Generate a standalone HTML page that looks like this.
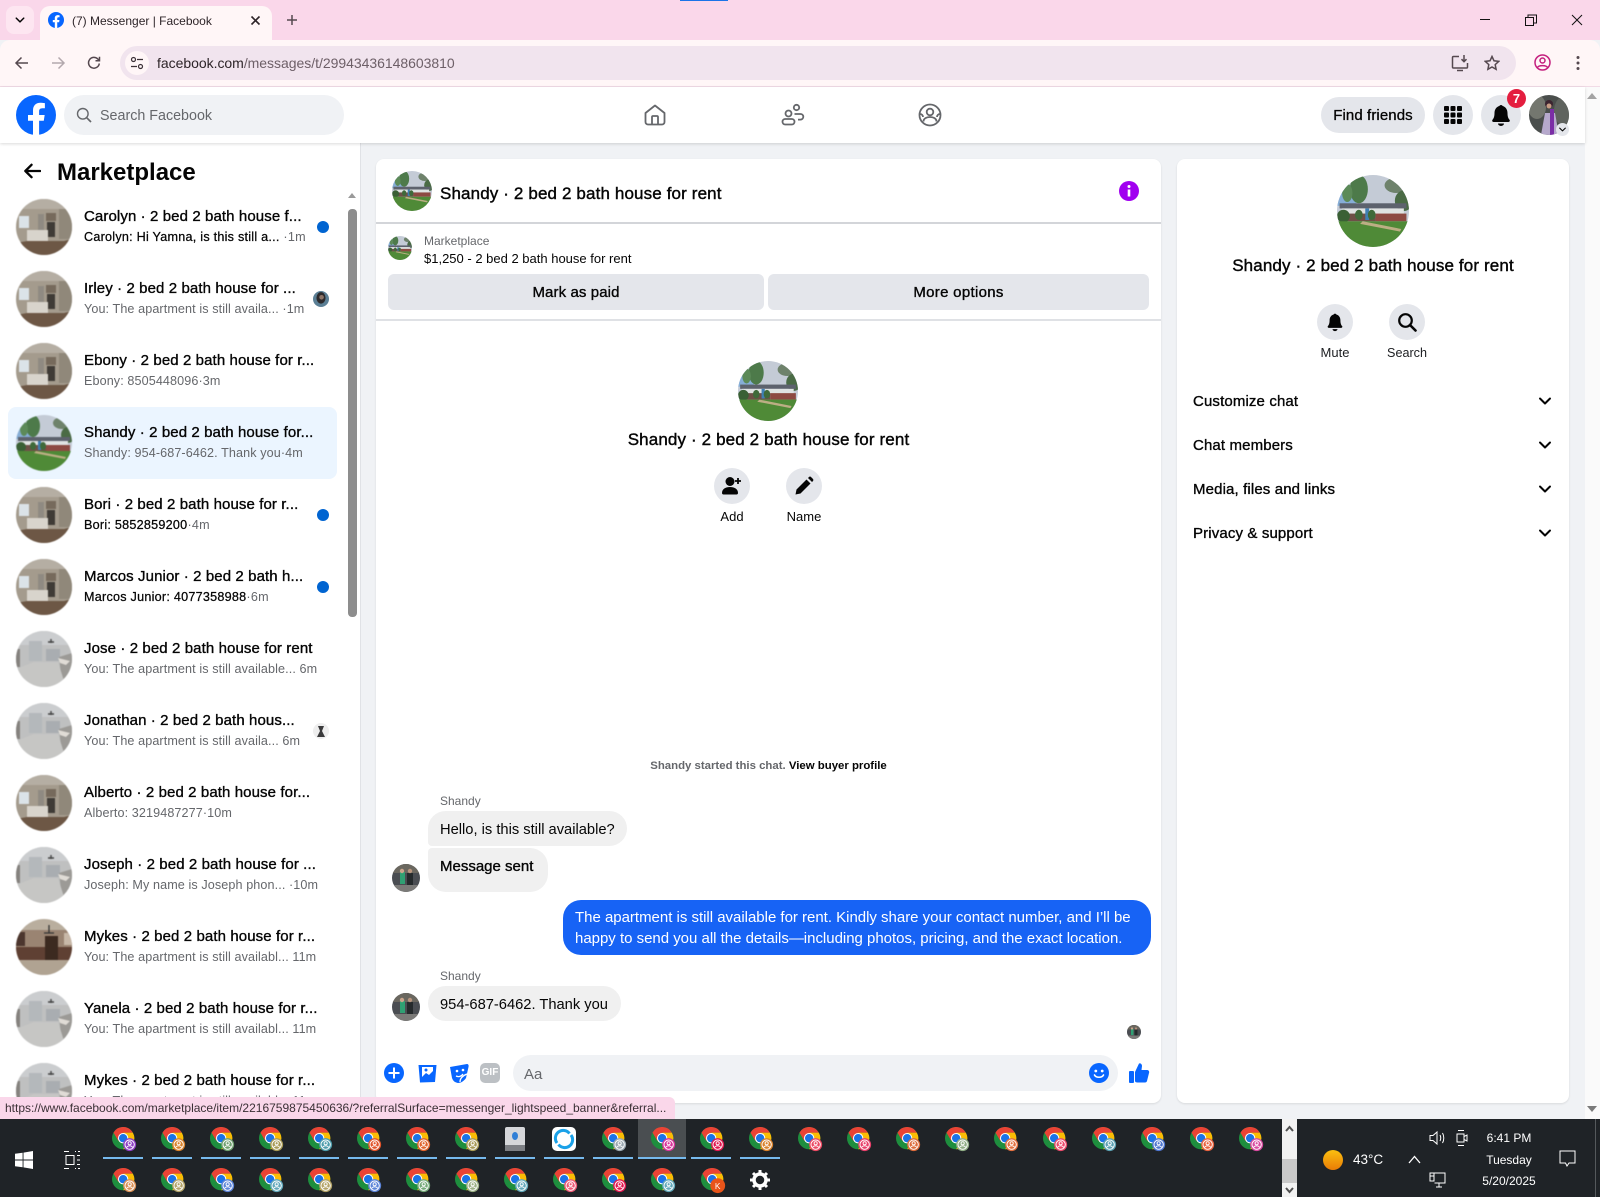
<!DOCTYPE html>
<html><head><meta charset="utf-8"><title>(7) Messenger | Facebook</title>
<style>
*{box-sizing:border-box}
html,body{margin:0;padding:0;width:1600px;height:1197px;overflow:hidden;background:#f0f2f5;font-family:"Liberation Sans",sans-serif;color:#050505}
.a{position:absolute}
.t{position:absolute;white-space:nowrap;line-height:20px}
.m{-webkit-text-stroke:.4px currentColor;letter-spacing:.13px}
.r{position:absolute;left:8px;width:329px;height:72px}
.r svg.av{position:absolute;left:8px;top:8px;width:56px;height:56px;border-radius:50%;filter:blur(.4px)}
.r b{position:absolute;left:76px;top:16px;font-weight:400;font-size:15px;line-height:20px;white-space:nowrap;letter-spacing:.1px;-webkit-text-stroke:.35px #050505}
.r i{position:absolute;left:76px;top:37px;font-style:normal;font-size:12.6px;line-height:18px;white-space:nowrap;color:#65676b;letter-spacing:.1px}
.r i.u{color:#050505;-webkit-text-stroke:.25px #050505;letter-spacing:.25px}
.r i.u span{color:#65676b;-webkit-text-stroke:0}
.dot{position:absolute;left:309px;top:30px;width:12px;height:12px;border-radius:50%;background:#0064d1}
.circ{position:absolute;border-radius:50%;background:#e4e6eb}
.bub{position:absolute;background:#f0f0f0;font-size:14.7px;line-height:20px;white-space:nowrap}
.ch{position:absolute;width:26px;height:26px}
.ul{position:absolute;top:1157px;width:40px;height:2px;background:#76b9ed}
.mi{position:absolute;left:1193px;font-size:15px;line-height:20px;letter-spacing:.13px;-webkit-text-stroke:.35px #050505;white-space:nowrap}
</style></head>
<body>
<svg width="0" height="0" style="position:absolute">
<defs>
<symbol id="c" viewBox="0 0 28 28">
<circle cx="12" cy="12" r="12" fill="#1e8e3e"/>
<path d="M22.4 6A12 12 0 0 1 12 24L17.2 15 12 6z" fill="#fbbc04"/>
<path d="M1.6 6A12 12 0 0 1 22.4 6H12L6.8 15z" fill="#ea4335"/>
<circle cx="12" cy="12" r="5.6" fill="#fff"/><circle cx="12" cy="12" r="4.5" fill="#1a73e8"/>
<circle cx="19" cy="19" r="7" fill="currentColor"/>
<circle cx="19" cy="19" r="5" fill="none" stroke="#fff" stroke-width="1"/>
<circle cx="19" cy="17.5" r="1.7" fill="none" stroke="#fff" stroke-width="1"/>
<path d="M15.8 22a3.4 2.6 0 0 1 6.4 0" fill="none" stroke="#fff" stroke-width="1"/>
</symbol>
<symbol id="kit" viewBox="0 0 56 56">
<rect width="56" height="56" fill="#a49b8d"/>
<rect y="0" width="56" height="10" fill="#b5aea3"/>
<rect x="3" y="17" width="10" height="12" fill="#dbe3e8"/>
<rect x="22" y="15" width="6" height="16" fill="#8f8a82"/>
<rect x="30" y="14" width="10" height="8" fill="#766a5c"/>
<rect x="31" y="23" width="8" height="15" fill="#3f3b36"/>
<rect x="11" y="31" width="21" height="11" fill="#d8d4cc"/>
<rect x="43" y="10" width="13" height="30" fill="#90887a"/>
<path d="M0 44 11 42H48L56 40V56H0z" fill="#6d5745"/>
</symbol>
<symbol id="gry" viewBox="0 0 56 56">
<rect width="56" height="56" fill="#bfc0c0"/>
<rect width="56" height="14" fill="#cbcdcf"/>
<rect x="30" y="18" width="14" height="12" fill="#a9adb1"/>
<rect x="13" y="10" width="13" height="20" fill="#b4b8bb"/>
<path d="M43 26 56 22V50L46 52z" fill="#9c9a96"/>
<path d="M42 27 54 30 50 34 44 32z" fill="#e0dcd6"/>
<path d="M32 11h6M35 8v4" stroke="#444" stroke-width="1.4"/>
<path d="M0 38 18 31H42L50 56H0z" fill="#c6c6c4"/>
<rect x="0" y="18" width="4" height="18" fill="#85827e"/>
</symbol>
<symbol id="drk" viewBox="0 0 56 56">
<rect width="56" height="56" fill="#b9ae9e"/>
<rect y="11" width="56" height="17" fill="#9a8472"/>
<rect y="28" width="56" height="13" fill="#5f4033"/>
<rect x="29" y="17" width="13" height="24" fill="#3c2a20"/>
<rect x="0" y="13" width="9" height="14" fill="#4c362e"/>
<rect x="48" y="14" width="8" height="12" fill="#c8b8a8"/>
<rect y="41" width="56" height="15" fill="#b0a392"/>
<path d="M33 6v8M28 14h10" stroke="#333" stroke-width="1.3"/>
</symbol>
<symbol id="hou" viewBox="0 0 56 56">
<rect width="56" height="56" fill="#c4cbd6"/>
<rect x="0" y="8" width="15" height="16" fill="#86add6"/>
<ellipse cx="17" cy="11" rx="7" ry="11" fill="#4d7a4a"/>
<ellipse cx="8" cy="14" rx="4" ry="7" fill="#5c8a58"/>
<ellipse cx="46" cy="8" rx="9" ry="6" fill="#596f50" opacity=".8"/>
<ellipse cx="52" cy="20" rx="7" ry="8" fill="#4a6b45"/>
<rect x="2" y="22" width="52" height="4" fill="#5d626d"/>
<rect x="4" y="26" width="48" height="5" fill="#dfe3e2"/>
<rect x="30" y="30" width="24" height="6" fill="#8d4a42"/>
<rect x="4" y="30" width="26" height="6" fill="#6e5047"/>
<rect x="22" y="26" width="3" height="9" fill="#3f80b4"/>
<ellipse cx="5" cy="32" rx="5" ry="5" fill="#3a6035"/>
<ellipse cx="17" cy="31" rx="3" ry="4" fill="#3f6a3a"/>
<ellipse cx="27" cy="31" rx="3" ry="4" fill="#3f6a3a"/>
<rect y="36" width="56" height="20" fill="#4f8a37"/>
<path d="M20 36 50 42 49 44 18 38z" fill="#bcae84"/>
</symbol>
<symbol id="ppl" viewBox="0 0 28 28">
<rect width="28" height="28" fill="#4a4d52"/>
<rect x="0" y="0" width="28" height="9" fill="#6a675f"/>
<rect x="8" y="8" width="5" height="12" fill="#2fa073"/>
<circle cx="10" cy="7" r="2.2" fill="#c9a58c"/>
<rect x="15" y="9" width="6" height="12" fill="#252a2c"/>
<circle cx="18" cy="7" r="2.2" fill="#b7957e"/>
<rect x="0" y="21" width="28" height="7" fill="#7b7a78"/>
</symbol>
<symbol id="bell" viewBox="0 0 24 24"><path d="M12 2a2 2 0 0 0-1.7 1C7.400 3.800 5.500 6.500 5.500 10c0 3.500-.8 5.500-2 6.800-.7.800-.2 2.200 1 2.200h15c1.200 0 1.700-1.400 1-2.200-1.200-1.300-2-3.300-2-6.800 0-3.500-1.900-6.200-4.800-7A2 2 0 0 0 12 2zM9 20.500a3 2.500 0 0 0 6 0z" fill="#050505"/></symbol>
<symbol id="chev" viewBox="0 0 16 16"><path d="M3 5.500 8 10.500 13 5.500" fill="none" stroke="#050505" stroke-width="2" stroke-linecap="round" stroke-linejoin="round"/></symbol>
</defs></svg>

<!-- Browser chrome -->
<div class="a" style="left:0;top:0;width:1600px;height:40px;background:#fad7ea"></div>
<div class="a" style="left:680px;top:0;width:48px;height:1px;background:#1a73e8"></div>
<div class="a" style="left:6px;top:6px;width:28px;height:28px;border-radius:8px;background:#fde6f1"></div>
<svg class="a" style="left:14px;top:14px" width="12" height="12" viewBox="0 0 16 16"><use href="#chev"/></svg>
<div class="a" style="left:40px;top:6px;width:232px;height:36px;background:#fff6f7;border-radius:10px 10px 0 0"></div>
<svg class="a" style="left:48px;top:12px" width="16" height="16" viewBox="0 0 36 36"><circle cx="18" cy="18" r="18" fill="#0866ff"/><path d="M25 23.200l.8-5.200h-5v-3.300c0-1.500.7-2.800 3-2.800h2.200V7.400S24 7 22 7c-4.100 0-6.700 2.500-6.700 6.900V18H10.800v5.200h4.500V36h5.500V23.200z" fill="#fff"/></svg>
<div class="t" style="left:72px;top:11px;font-size:12px;color:#2d2428;line-height:20px">(7) Messenger | Facebook</div>
<svg class="a" style="left:250px;top:15px" width="11" height="11" viewBox="0 0 11 11"><path d="M1.500 1.500 9.500 9.500M9.500 1.500 1.500 9.500" stroke="#2d2428" stroke-width="1.600"/></svg>
<svg class="a" style="left:286px;top:14px" width="12" height="12" viewBox="0 0 12 12"><path d="M6 1v10M1 6h10" stroke="#55484f" stroke-width="1.500"/></svg>
<svg class="a" style="left:1479px;top:14px" width="12" height="12"><path d="M1 5.500h10" stroke="#111" stroke-width="1"/></svg>
<svg class="a" style="left:1525px;top:14px" width="12" height="12"><path d="M.5 3.500h8v8h-8zM3 3.500V1h8.500v8H8.500" fill="none" stroke="#111"/></svg>
<svg class="a" style="left:1571px;top:14px" width="12" height="12"><path d="M1 1l10 10M11 1 1 11" stroke="#111"/></svg>

<div class="a" style="left:0;top:40px;width:1600px;height:47px;background:#fff6f7;border-bottom:1px solid #f1dbe6;border-radius:10px 10px 0 0"></div>
<svg class="a" style="left:14px;top:55px" width="16" height="16" viewBox="0 0 16 16"><path d="M14 8H2.500M7.500 2.500 2 8l5.500 5.500" fill="none" stroke="#55484f" stroke-width="1.500"/></svg>
<svg class="a" style="left:50px;top:55px" width="16" height="16" viewBox="0 0 16 16"><path d="M2 8h11.500M8.500 2.500 14 8l-5.500 5.500" fill="none" stroke="#b3a8ad" stroke-width="1.500"/></svg>
<svg class="a" style="left:86px;top:55px" width="16" height="16" viewBox="0 0 16 16"><path d="M13.300 8.500A5.400 5.400 0 1 1 11.800 4L13.500 5.700M13.500 1.800v4h-4" fill="none" stroke="#55484f" stroke-width="1.500"/></svg>
<div class="a" style="left:120px;top:46px;width:1396px;height:34px;border-radius:17px;background:#f1e4ee"></div>
<div class="a" style="left:125px;top:51px;width:24px;height:24px;border-radius:50%;background:#fff6f7"></div>
<svg class="a" style="left:130px;top:56px" width="14" height="14" viewBox="0 0 14 14"><circle cx="3.500" cy="3.500" r="2" fill="none" stroke="#3b3136" stroke-width="1.200"/><path d="M7 3.500h6M1 10.500h6" stroke="#3b3136" stroke-width="1.200"/><circle cx="10.500" cy="10.500" r="2" fill="none" stroke="#3b3136" stroke-width="1.200"/></svg>
<div class="t" style="left:157px;top:53px;font-size:14px;letter-spacing:-.03px;color:#6d5f67"><span style="color:#2d2428">facebook.com</span>/messages/t/29943436148603810</div>
<svg class="a" style="left:1451px;top:54px" width="18" height="18" viewBox="0 0 18 18"><path d="M8 2.500H2.500a1 1 0 0 0-1 1V13a1 1 0 0 0 1 1h13a1 1 0 0 0 1-1V9M6 16.500h6M13 1v6.500M10.500 5.200 13 7.700l2.500-2.500" fill="none" stroke="#55484f" stroke-width="1.500"/></svg>
<svg class="a" style="left:1484px;top:55px" width="16" height="16" viewBox="0 0 16 16"><path d="M8 1.500l2 4.300 4.700.6-3.500 3.200.9 4.700L8 12l-4.100 2.300.9-4.700L1.300 6.400 6 5.800z" fill="none" stroke="#55484f" stroke-width="1.500"/></svg>
<svg class="a" style="left:1534px;top:54px" width="17" height="17" viewBox="0 0 17 17"><circle cx="8.500" cy="8.500" r="7.500" fill="none" stroke="#c41f7e" stroke-width="1.500"/><circle cx="8.500" cy="6.500" r="2.500" fill="none" stroke="#c41f7e" stroke-width="1.500"/><path d="M3.500 13.500c1-2.500 9-2.500 10 0" fill="none" stroke="#c41f7e" stroke-width="1.500"/></svg>
<svg class="a" style="left:1576px;top:55px" width="4" height="16" viewBox="0 0 4 16"><circle cx="2" cy="2.500" r="1.500" fill="#55484f"/><circle cx="2" cy="8" r="1.500" fill="#55484f"/><circle cx="2" cy="13.500" r="1.500" fill="#55484f"/></svg>

<!-- page scrollbar -->
<div class="a" style="left:1585px;top:87px;width:15px;height:1032px;background:#fafafa"></div>
<div class="a" style="left:1587px;top:93px;border:5px solid transparent;border-bottom:6px solid #a3a3a3;border-top:0"></div>
<div class="a" style="left:1587px;top:1106px;border:5px solid transparent;border-top:6px solid #7a7a7a;border-bottom:0"></div>

<!-- FB header -->
<div class="a" style="left:0;top:87px;width:1585px;height:56px;background:#fff;box-shadow:0 1px 3px rgba(0,0,0,.15);z-index:3">
<svg class="a" style="left:16px;top:8px" width="40" height="40" viewBox="0 0 36 36"><circle cx="18" cy="18" r="18" fill="#0866ff"/><path d="M25 23.200l.8-5.200h-5v-3.300c0-1.500.7-2.800 3-2.800h2.200V7.400S24 7 22 7c-4.100 0-6.700 2.500-6.700 6.900V18H10.800v5.200h4.500V36h5.500V23.200z" fill="#fff"/></svg>
<div class="a" style="left:64px;top:8px;width:280px;height:40px;border-radius:20px;background:#f0f2f5"></div>
<svg class="a" style="left:76px;top:20px" width="16" height="16" viewBox="0 0 16 16"><circle cx="6.800" cy="6.800" r="5.300" fill="none" stroke="#65676b" stroke-width="1.400"/><path d="M10.800 10.800 15 15" stroke="#65676b" stroke-width="1.700"/></svg>
<div class="t" style="left:100px;top:19px;font-size:14.3px;color:#65676b">Search Facebook</div>
<svg class="a" style="left:643px;top:16px" width="24" height="24" viewBox="0 0 24 24"><path d="M2.500 10 12 2.500 21.500 10V19a2.500 2.500 0 0 1-2.500 2.500H5A2.500 2.500 0 0 1 2.500 19zM9 21.500V14a1 1 0 0 1 1-1h4a1 1 0 0 1 1 1v7.500" fill="none" stroke="#65676b" stroke-width="1.800" stroke-linejoin="round"/></svg>
<svg class="a" style="left:781px;top:16px" width="24" height="24" viewBox="0 0 24 24"><circle cx="7.500" cy="10.500" r="3" fill="none" stroke="#65676b" stroke-width="1.800"/><rect x="1.500" y="16" width="12" height="5.500" rx="2.700" fill="none" stroke="#65676b" stroke-width="1.800"/><circle cx="15.500" cy="4.500" r="2.700" fill="none" stroke="#65676b" stroke-width="1.800"/><path d="M13.500 11h6a2.800 2.800 0 0 1 0 5.600H17" fill="none" stroke="#65676b" stroke-width="1.800"/></svg>
<svg class="a" style="left:918px;top:16px" width="24" height="24" viewBox="0 0 24 24"><circle cx="12" cy="12" r="10.500" fill="none" stroke="#65676b" stroke-width="1.800"/><circle cx="12" cy="9" r="3.300" fill="none" stroke="#65676b" stroke-width="1.800"/><path d="M5.500 18.500c0-3 3-4.500 6.500-4.500s6.500 1.500 6.500 4.500M2 11a3 3 0 0 1 3 3M22 11a3 3 0 0 0-3 3" fill="none" stroke="#65676b" stroke-width="1.800"/></svg>
<div class="a" style="left:1321px;top:10px;width:104px;height:36px;border-radius:18px;background:#e4e6eb;text-align:center;font-size:15px;line-height:37px;letter-spacing:.1px;-webkit-text-stroke:.3px #050505">Find friends</div>
<div class="circ" style="left:1433px;top:8px;width:40px;height:40px"></div>
<svg class="a" style="left:1443px;top:18px" width="20" height="20" viewBox="0 0 20 20" fill="#050505"><rect x="1" y="1" width="5" height="5" rx="1"/><rect x="7.500" y="1" width="5" height="5" rx="1"/><rect x="14" y="1" width="5" height="5" rx="1"/><rect x="1" y="7.500" width="5" height="5" rx="1"/><rect x="7.500" y="7.500" width="5" height="5" rx="1"/><rect x="14" y="7.500" width="5" height="5" rx="1"/><rect x="1" y="14" width="5" height="5" rx="1"/><rect x="7.500" y="14" width="5" height="5" rx="1"/><rect x="14" y="14" width="5" height="5" rx="1"/></svg>
<div class="circ" style="left:1481px;top:8px;width:40px;height:40px"></div>
<svg class="a" style="left:1489px;top:16px" width="24" height="24"><use href="#bell"/></svg>
<div class="a" style="left:1507px;top:2px;width:19px;height:19px;border-radius:50%;background:#e41e3f;color:#fff;font-size:13px;font-weight:bold;line-height:19px;text-align:center">7</div>
<svg class="a" style="left:1529px;top:8px;border-radius:50%" width="40" height="40" viewBox="0 0 40 40"><rect width="40" height="40" fill="#4a4e4c"/><ellipse cx="8" cy="12" rx="9" ry="12" fill="#74776f"/><ellipse cx="34" cy="16" rx="9" ry="14" fill="#5f635e"/><path d="M12 40 16 18h10l4 22z" fill="#b6a9cc"/><rect x="21" y="14" width="4" height="26" fill="#7b2ea6"/><circle cx="20" cy="9" r="4" fill="#3b2430"/><circle cx="20" cy="11" r="2.500" fill="#c79c84"/></svg>
<div class="a" style="left:1556px;top:36px;width:13px;height:13px;border-radius:50%;background:#e4e6eb"></div>
<svg class="a" style="left:1558px;top:38px" width="9" height="9" viewBox="0 0 16 16"><use href="#chev"/></svg>
</div>

<!-- Left panel -->
<div class="a" style="left:0;top:143px;width:361px;height:976px;background:#fff;border-right:1px solid #e0e2e6;overflow:hidden">
<svg class="a" style="left:23px;top:20px" width="18" height="16" viewBox="0 0 20 18"><path d="M19 9H3M9.500 2 2.500 9l7 7" fill="none" stroke="#050505" stroke-width="2.600" stroke-linecap="round" stroke-linejoin="round"/></svg>
<div class="t" style="left:57px;top:15px;font-size:24px;font-weight:bold;line-height:29px">Marketplace</div>
<div class="a" style="left:348px;top:50px;border:4px solid transparent;border-bottom:5px solid #9a9a9a;border-top:0"></div>
<div class="a" style="left:348px;top:66px;width:9px;height:408px;border-radius:4px;background:#8d8d8d"></div>

<div class="r" style="top:48px"><svg class="av"><use href="#kit"/></svg><b>Carolyn · 2 bed 2 bath house f...</b><i class="u">Carolyn: Hi Yamna, is this still a... <span> ·1m</span></i><div class="dot"></div></div>
<div class="r" style="top:120px"><svg class="av"><use href="#kit"/></svg><b>Irley · 2 bed 2 bath house for ...</b><i>You: The apartment is still availa... ·1m</i><svg class="a" style="left:305px;top:28px;border-radius:50%" width="16" height="16" viewBox="0 0 28 28"><rect width="28" height="28" fill="#5b7f95"/><ellipse cx="14" cy="12" rx="8" ry="10" fill="#2d2a2c"/><circle cx="15" cy="11" r="4" fill="#8d7568"/></svg></div>
<div class="r" style="top:192px"><svg class="av"><use href="#kit"/></svg><b>Ebony · 2 bed 2 bath house for r...</b><i>Ebony: 8505448096·3m</i></div>
<div class="r" style="top:264px;background:#ebf5ff;border-radius:8px"><svg class="av"><use href="#hou"/></svg><b>Shandy · 2 bed 2 bath house for...</b><i>Shandy: 954-687-6462. Thank you·4m</i></div>
<div class="r" style="top:336px"><svg class="av"><use href="#kit"/></svg><b>Bori · 2 bed 2 bath house for r...</b><i class="u">Bori: 5852859200<span>·4m</span></i><div class="dot"></div></div>
<div class="r" style="top:408px"><svg class="av"><use href="#kit"/></svg><b>Marcos Junior · 2 bed 2 bath h...</b><i class="u">Marcos Junior: 4077358988<span>·6m</span></i><div class="dot"></div></div>
<div class="r" style="top:480px"><svg class="av"><use href="#gry"/></svg><b>Jose · 2 bed 2 bath house for rent</b><i>You: The apartment is still available... 6m</i></div>
<div class="r" style="top:552px"><svg class="av"><use href="#gry"/></svg><b>Jonathan · 2 bed 2 bath hous...</b><i>You: The apartment is still availa... 6m</i><svg class="a" style="left:305px;top:28px;border-radius:50%" width="16" height="16" viewBox="0 0 16 16"><rect width="16" height="16" fill="#eee"/><path d="M5 3h6l-2 5 3 6H4l3-6z" fill="#3a3a3c"/></svg></div>
<div class="r" style="top:624px"><svg class="av"><use href="#kit"/></svg><b>Alberto · 2 bed 2 bath house for...</b><i>Alberto: 3219487277·10m</i></div>
<div class="r" style="top:696px"><svg class="av"><use href="#gry"/></svg><b>Joseph · 2 bed 2 bath house for ...</b><i>Joseph: My name is Joseph phon... ·10m</i></div>
<div class="r" style="top:768px"><svg class="av"><use href="#drk"/></svg><b>Mykes · 2 bed 2 bath house for r...</b><i>You: The apartment is still availabl... 11m</i></div>
<div class="r" style="top:840px"><svg class="av"><use href="#gry"/></svg><b>Yanela · 2 bed 2 bath house for r...</b><i>You: The apartment is still availabl... 11m</i></div>
<div class="r" style="top:912px"><svg class="av"><use href="#gry"/></svg><b>Mykes · 2 bed 2 bath house for r...</b><i>You: The apartment is still availabl... 11m</i></div>
</div>

<!-- Center panel -->
<div class="a" style="left:376px;top:159px;width:785px;height:944px;background:#fff;border-radius:8px;box-shadow:0 1px 2px rgba(0,0,0,.1)"></div>
<svg class="a" style="left:392px;top:171px;border-radius:50%;filter:blur(.3px)" width="40" height="40"><use href="#hou"/></svg>
<div class="t m" style="left:440px;top:184px;font-size:17px">Shandy · 2 bed 2 bath house for rent</div>
<svg class="a" style="left:1119px;top:181px" width="20" height="20" viewBox="0 0 20 20"><circle cx="10" cy="10" r="10" fill="#a100f0"/><circle cx="10" cy="5.500" r="1.500" fill="#fff"/><rect x="8.700" y="8.500" width="2.600" height="7" fill="#fff"/></svg>
<div class="a" style="left:376px;top:222px;width:785px;height:2px;background:#d3d5d9"></div>
<svg class="a" style="left:388px;top:236px;border-radius:50%;filter:blur(.3px)" width="24" height="24"><use href="#hou"/></svg>
<div class="t" style="left:424px;top:231px;font-size:12px;color:#65676b">Marketplace</div>
<div class="t" style="left:424px;top:249px;font-size:13px">$1,250 - 2 bed 2 bath house for rent</div>
<div class="a" style="left:388px;top:274px;width:376px;height:36px;border-radius:6px;background:#e4e6eb;text-align:center;font-size:15px;line-height:37px;letter-spacing:.1px;-webkit-text-stroke:.35px #050505">Mark as paid</div>
<div class="a" style="left:768px;top:274px;width:381px;height:36px;border-radius:6px;background:#e4e6eb;text-align:center;font-size:15px;line-height:37px;letter-spacing:.3px;-webkit-text-stroke:.35px #050505">More options</div>
<div class="a" style="left:376px;top:319px;width:785px;height:2px;background:#dfe1e5"></div>

<svg class="a" style="left:738px;top:361px;border-radius:50%;filter:blur(.3px)" width="60" height="60"><use href="#hou"/></svg>
<div class="t m" style="left:376px;width:785px;text-align:center;top:430px;font-size:17px">Shandy · 2 bed 2 bath house for rent</div>
<div class="circ" style="left:714px;top:468px;width:36px;height:36px"></div>
<svg class="a" style="left:722px;top:476px" width="20" height="20" viewBox="0 0 20 20" fill="#050505"><circle cx="8" cy="5.500" r="4.500"/><path d="M0 17c0-4 3.500-6 8-6s8 2 8 6c0 1-.7 1.500-1.500 1.500h-13C.7 18.500 0 18 0 17z"/><path d="M16 2v6M13 5h6" stroke="#050505" stroke-width="1.800"/></svg>
<div class="t" style="left:692px;width:80px;text-align:center;top:507px;font-size:13px">Add</div>
<div class="circ" style="left:786px;top:468px;width:36px;height:36px"></div>
<svg class="a" style="left:794px;top:476px" width="20" height="20" viewBox="0 0 20 20" fill="#050505"><path d="M12.500 3.500 16.500 7.500 6.500 17.500 1.500 18.500 2.500 13.500zM14 2l1-1a1.500 1.500 0 0 1 2 0l2 2a1.500 1.500 0 0 1 0 2l-1 1z"/></svg>
<div class="t" style="left:764px;width:80px;text-align:center;top:507px;font-size:13px">Name</div>

<div class="t" style="left:376px;width:785px;text-align:center;top:756px;font-size:11.4px;font-weight:bold;color:#65676b">Shandy started this chat. <span style="color:#050505">View buyer profile</span></div>
<div class="t" style="left:440px;top:791px;font-size:12px;color:#65676b">Shandy</div>
<div class="bub" style="left:428px;top:811px;width:199px;height:35px;border-radius:18px 18px 18px 4px;padding:9px 12px 0">Hello, is this still available?</div>
<div class="bub" style="left:428px;top:848px;width:120px;height:44px;border-radius:4px 18px 18px 18px;padding:9px 12px 0;font-size:15px;-webkit-text-stroke:.35px #050505">Message sent</div>
<svg class="a" style="left:392px;top:864px;border-radius:50%" width="28" height="28"><use href="#ppl"/></svg>
<div class="bub" style="left:563px;top:900px;width:588px;height:55px;border-radius:18px;padding:7px 12px;background:#1763f5;color:#fff;font-size:15px;line-height:21px;letter-spacing:-.015px">The apartment is still available for rent. Kindly share your contact number, and I’ll be<br>happy to send you all the details—including photos, pricing, and the exact location.</div>
<div class="t" style="left:440px;top:966px;font-size:12px;color:#65676b">Shandy</div>
<div class="bub" style="left:428px;top:986px;width:193px;height:35px;border-radius:18px;padding:9px 12px 0">954-687-6462. Thank you</div>
<svg class="a" style="left:392px;top:993px;border-radius:50%" width="28" height="28"><use href="#ppl"/></svg>
<svg class="a" style="left:1127px;top:1025px;border-radius:50%" width="14" height="14" viewBox="0 0 28 28"><use href="#ppl"/></svg>

<!-- composer -->
<svg class="a" style="left:384px;top:1063px" width="20" height="20" viewBox="0 0 20 20"><circle cx="10" cy="10" r="10" fill="#0866ff"/><path d="M10 4.500v11M4.500 10h11" stroke="#fff" stroke-width="2"/></svg>
<svg class="a" style="left:417px;top:1063px" width="20" height="20" viewBox="0 0 20 20"><path d="M1.500 2 3 19.500l15-.5 1.500-17z" fill="#0866ff"/><rect x="5" y="4" width="11" height="10" fill="#fff"/><circle cx="9" cy="7" r="1.500" fill="#0866ff"/><path d="M5 14l4-4 3 2 4-4v6z" fill="#0866ff"/></svg>
<svg class="a" style="left:449px;top:1063px" width="20" height="20" viewBox="0 0 20 20"><path d="M1 4 18 1c1 0 2 1 1.500 3L17 15c-2 3-5 5-8 5-3-.5-5-2-6-5z" fill="#0866ff"/><circle cx="8" cy="8" r="1.300" fill="#fff"/><circle cx="14" cy="7" r="1.300" fill="#fff"/><path d="M7 13c2 1 5 1 7-2M11 19c0-3 2-6 7-8" stroke="#fff" stroke-width="1.300" fill="none"/></svg>
<div class="a" style="left:480px;top:1063px;width:20px;height:20px;border-radius:5px;background:#bcc0c4;color:#fff;font-size:10px;font-weight:bold;line-height:20px;text-align:center">GIF</div>
<div class="a" style="left:513px;top:1055px;width:605px;height:36px;border-radius:18px;background:#f0f2f5"></div>
<div class="t" style="left:524px;top:1065px;font-size:15px;color:#65676b">Aa</div>
<svg class="a" style="left:1089px;top:1063px" width="20" height="20" viewBox="0 0 20 20"><circle cx="10" cy="10" r="10" fill="#0866ff"/><circle cx="6.800" cy="8" r="1.400" fill="#fff"/><circle cx="13.200" cy="8" r="1.400" fill="#fff"/><path d="M5.500 12c1.500 3 7.500 3 9 0" fill="none" stroke="#fff" stroke-width="1.600" stroke-linecap="round"/></svg>
<svg class="a" style="left:1128px;top:1062px" width="22" height="22" viewBox="0 0 22 22"><rect x="1" y="9" width="5" height="12" rx="1" fill="#0866ff"/><path d="M7 10 11 1.500c1.500-.5 3 .5 3 2.500l-.5 4H19c2 0 2.500 2 2 3l-2 8c-.3 1-1 1.500-2 1.500H9.500C8 20.500 7 20 7 19z" fill="#0866ff"/></svg>

<!-- Right panel -->
<div class="a" style="left:1177px;top:159px;width:392px;height:944px;background:#fff;border-radius:8px;box-shadow:0 1px 2px rgba(0,0,0,.1)"></div>
<svg class="a" style="left:1337px;top:175px;border-radius:50%;filter:blur(.3px)" width="72" height="72"><use href="#hou"/></svg>
<div class="t m" style="left:1177px;width:392px;text-align:center;top:256px;font-size:17px">Shandy · 2 bed 2 bath house for rent</div>
<div class="circ" style="left:1317px;top:304px;width:36px;height:36px"></div>
<svg class="a" style="left:1325px;top:312px" width="20" height="20" viewBox="0 0 24 24"><use href="#bell"/></svg>
<div class="t" style="left:1295px;width:80px;text-align:center;top:343px;font-size:13px;color:#1c1e21">Mute</div>
<div class="circ" style="left:1389px;top:304px;width:36px;height:36px"></div>
<svg class="a" style="left:1397px;top:312px" width="20" height="20" viewBox="0 0 20 20"><circle cx="8.500" cy="8.500" r="6.300" fill="none" stroke="#050505" stroke-width="2.200"/><path d="M13 13 18.500 18.500" stroke="#050505" stroke-width="2.600" stroke-linecap="round"/></svg>
<div class="t" style="left:1367px;width:80px;text-align:center;top:343px;font-size:12.6px;color:#1c1e21">Search</div>
<div class="mi" style="top:392px">Customize chat</div><svg class="a" style="left:1537px;top:393px" width="16" height="16"><use href="#chev"/></svg>
<div class="mi" style="top:436px">Chat members</div><svg class="a" style="left:1537px;top:437px" width="16" height="16"><use href="#chev"/></svg>
<div class="mi" style="top:480px">Media, files and links</div><svg class="a" style="left:1537px;top:481px" width="16" height="16"><use href="#chev"/></svg>
<div class="mi" style="top:524px">Privacy &amp; support</div><svg class="a" style="left:1537px;top:525px" width="16" height="16"><use href="#chev"/></svg>

<!-- Status tooltip -->
<div class="a" style="left:0;top:1097px;width:675px;height:22px;background:#fad7ea;border-radius:0 6px 0 0;z-index:5;padding-left:5px;font-size:12px;line-height:23px;color:#3a3035;white-space:nowrap">https://www.facebook.com/marketplace/item/2216759875450636/?referralSurface=messenger_lightspeed_banner&amp;referral...</div>

<!-- Taskbar -->
<div class="a" style="left:0;top:1119px;width:1600px;height:78px;background:#1f2327;z-index:6;overflow:hidden"></div>
<div class="a" style="left:0;top:0;width:1600px;height:1197px;z-index:7;pointer-events:none">
<svg class="a" style="left:15px;top:1151px" width="18" height="18" viewBox="0 0 18 18" fill="#fff"><path d="M0 2.800 7.600 1.700V8.500H0zM8.500 1.600 18 0V8.500H8.500zM0 9.500H7.600V16.300L0 15.200zM8.500 9.500H18V18L8.500 16.400z"/></svg>
<svg class="a" style="left:63px;top:1151px" width="18" height="18" viewBox="0 0 18 18" fill="none" stroke="#fff"><path d="M1 .5h5M1 17.500h5M12 .5h1M15 .5h2M12 17.500h1M15 17.500h2M3 4.500h8v9H3zM14 4.500h3M14 9h3M14 13.500h3"/></svg>

<div class="a" style="left:638px;top:1119px;width:48px;height:39px;background:#4a4e51"></div>
<div class="ul" style="left:103px"></div><div class="ul" style="left:152px"></div><div class="ul" style="left:201px"></div><div class="ul" style="left:250px"></div><div class="ul" style="left:299px"></div><div class="ul" style="left:348px"></div><div class="ul" style="left:397px"></div><div class="ul" style="left:446px"></div><div class="ul" style="left:495px"></div><div class="ul" style="left:544px"></div><div class="ul" style="left:593px"></div><div class="ul" style="left:638px;width:48px"></div><div class="ul" style="left:691px"></div><div class="ul" style="left:740px"></div>

<svg class="ch" style="left:112px;top:1127px;color:#8e3fc4"><use href="#c"/></svg>
<svg class="ch" style="left:161px;top:1127px;color:#d9822b"><use href="#c"/></svg>
<svg class="ch" style="left:210px;top:1127px;color:#6fa06f"><use href="#c"/></svg>
<svg class="ch" style="left:259px;top:1127px;color:#a89a55"><use href="#c"/></svg>
<svg class="ch" style="left:308px;top:1127px;color:#4d9cab"><use href="#c"/></svg>
<svg class="ch" style="left:357px;top:1127px;color:#e2542a"><use href="#c"/></svg>
<svg class="ch" style="left:406px;top:1127px;color:#e0622a"><use href="#c"/></svg>
<svg class="ch" style="left:455px;top:1127px;color:#a89a55"><use href="#c"/></svg>
<svg class="a" style="left:503px;top:1127px" width="24" height="24" viewBox="0 0 24 24"><rect x="2" y="0" width="20" height="24" rx="2" fill="#d5d7da"/><rect x="2" y="18" width="20" height="6" fill="#7d8085"/><ellipse cx="12" cy="9" rx="3" ry="4" fill="#2f7fd6"/></svg>
<div class="a" style="left:552px;top:1127px;width:24px;height:24px;border-radius:5px;background:#fff"></div>
<svg class="a" style="left:552px;top:1127px" width="24" height="24" viewBox="0 0 24 24"><path d="M17.500 6.500A7.500 7.500 0 0 0 5 16M6.500 17.500A7.500 7.500 0 0 0 19 8" fill="none" stroke="#1aa1e8" stroke-width="3"/></svg>
<svg class="ch" style="left:602px;top:1127px;color:#9aa7b0"><use href="#c"/></svg>
<svg class="ch" style="left:651px;top:1127px;color:#d6339a"><use href="#c"/></svg>
<svg class="ch" style="left:700px;top:1127px;color:#e0174f"><use href="#c"/></svg>
<svg class="ch" style="left:749px;top:1127px;color:#d9822b"><use href="#c"/></svg>
<svg class="ch" style="left:798px;top:1127px;color:#ec4a63"><use href="#c"/></svg>
<svg class="ch" style="left:847px;top:1127px;color:#e8406a"><use href="#c"/></svg>
<svg class="ch" style="left:896px;top:1127px;color:#dd6b3a"><use href="#c"/></svg>
<svg class="ch" style="left:945px;top:1127px;color:#8fad84"><use href="#c"/></svg>
<svg class="ch" style="left:994px;top:1127px;color:#e3703f"><use href="#c"/></svg>
<svg class="ch" style="left:1043px;top:1127px;color:#ea4a6a"><use href="#c"/></svg>
<svg class="ch" style="left:1092px;top:1127px;color:#5aa0b2"><use href="#c"/></svg>
<svg class="ch" style="left:1141px;top:1127px;color:#4d75cf"><use href="#c"/></svg>
<svg class="ch" style="left:1190px;top:1127px;color:#e8623f"><use href="#c"/></svg>
<svg class="ch" style="left:1239px;top:1127px;color:#d94aa0"><use href="#c"/></svg>

<svg class="ch" style="left:112px;top:1168px;color:#d98f55"><use href="#c"/></svg>
<svg class="ch" style="left:161px;top:1168px;color:#b3a368"><use href="#c"/></svg>
<svg class="ch" style="left:210px;top:1168px;color:#5c84d8"><use href="#c"/></svg>
<svg class="ch" style="left:259px;top:1168px;color:#62a8ba"><use href="#c"/></svg>
<svg class="ch" style="left:308px;top:1168px;color:#b3a368"><use href="#c"/></svg>
<svg class="ch" style="left:357px;top:1168px;color:#5c84d8"><use href="#c"/></svg>
<svg class="ch" style="left:406px;top:1168px;color:#74a978"><use href="#c"/></svg>
<svg class="ch" style="left:455px;top:1168px;color:#9bb085"><use href="#c"/></svg>
<svg class="ch" style="left:504px;top:1168px;color:#62a8ba"><use href="#c"/></svg>
<svg class="ch" style="left:553px;top:1168px;color:#ec5a76"><use href="#c"/></svg>
<svg class="ch" style="left:602px;top:1168px;color:#e0174f"><use href="#c"/></svg>
<svg class="ch" style="left:651px;top:1168px;color:#62a8ba"><use href="#c"/></svg>
<svg class="a" style="left:701px;top:1168px" width="26" height="26" viewBox="0 0 28 28"><circle cx="12" cy="12" r="12" fill="#1e8e3e"/><path d="M22.400 6A12 12 0 0 1 12 24L17.200 15 12 6z" fill="#fbbc04"/><path d="M1.600 6A12 12 0 0 1 22.400 6H12L6.800 15z" fill="#ea4335"/><circle cx="12" cy="12" r="5.600" fill="#fff"/><circle cx="12" cy="12" r="4.500" fill="#1a73e8"/><circle cx="18" cy="19" r="8" fill="#e8541a"/><text x="18" y="22.500" text-anchor="middle" font-family="Liberation Sans" font-size="9" fill="#fff">K</text></svg>
<svg class="a" style="left:749px;top:1169px" width="22" height="22" viewBox="0 0 22 22"><circle cx="11" cy="11" r="6" fill="none" stroke="#fff" stroke-width="3.500"/><path d="M11 1v4M11 17v4M1 11h4M17 11h4M4 4l3 3M15 15l3 3M4 18l3-3M15 7l3-3" stroke="#fff" stroke-width="3"/></svg>

<div class="a" style="left:1282px;top:1119px;width:15px;height:78px;background:#f2f2f2"></div>
<div class="a" style="left:1282px;top:1159px;width:15px;height:24px;background:#c9c9c9"></div>
<svg class="a" style="left:1285px;top:1125px" width="9" height="7"><path d="M1 6l3.500-4L8 6" fill="none" stroke="#505050" stroke-width="2"/></svg>
<svg class="a" style="left:1285px;top:1187px" width="9" height="7"><path d="M1 1l3.500 4L8 1" fill="none" stroke="#505050" stroke-width="2"/></svg>

<div class="a" style="left:1323px;top:1150px;width:20px;height:20px;border-radius:50%;background:linear-gradient(#fbbf10,#e97c06)"></div>
<div class="t" style="left:1353px;top:1150px;font-size:13.5px;color:#fff">43°C</div>
<svg class="a" style="left:1408px;top:1155px" width="13" height="9"><path d="M1 8l5.500-6.500L12 8" fill="none" stroke="#fff" stroke-width="1.300"/></svg>
<svg class="a" style="left:1429px;top:1130px" width="18" height="16" viewBox="0 0 18 16" fill="none" stroke="#fff"><path d="M1 5.500h3L8 2v12l-4-3.500H1zM11 5c1 2 1 4 0 6M13.500 3c1.700 3 1.700 7 0 10"/></svg>
<svg class="a" style="left:1455px;top:1129px" width="14" height="18" viewBox="0 0 14 18" fill="none" stroke="#fff"><path d="M3 1.500h6M3 16.500h6M2 5h7v8H2zM9 7.500l3-1.500v6l-3-1.500"/></svg>
<div class="t" style="left:1479px;width:60px;text-align:center;top:1128px;font-size:12px;color:#fff">6:41 PM</div>
<div class="t" style="left:1479px;width:60px;text-align:center;top:1150px;font-size:12px;color:#fff">Tuesday</div>
<div class="t" style="left:1474px;width:70px;text-align:center;top:1171px;font-size:12px;color:#fff">5/20/2025</div>
<svg class="a" style="left:1429px;top:1172px" width="17" height="16" viewBox="0 0 17 16" fill="none" stroke="#fff"><path d="M5.500 1H16v10H5.500M1 1h4v8H1zM1 4h4M10 11v4M7 15h6"/></svg>
<svg class="a" style="left:1559px;top:1150px" width="17" height="17" viewBox="0 0 17 17" fill="none" stroke="#fff"><path d="M1 1h15v12h-6l-2 3-1.500-3H1z"/></svg>
<div class="a" style="left:1595px;top:1119px;width:1px;height:78px;background:#55595c"></div>
</div>
</body></html>
